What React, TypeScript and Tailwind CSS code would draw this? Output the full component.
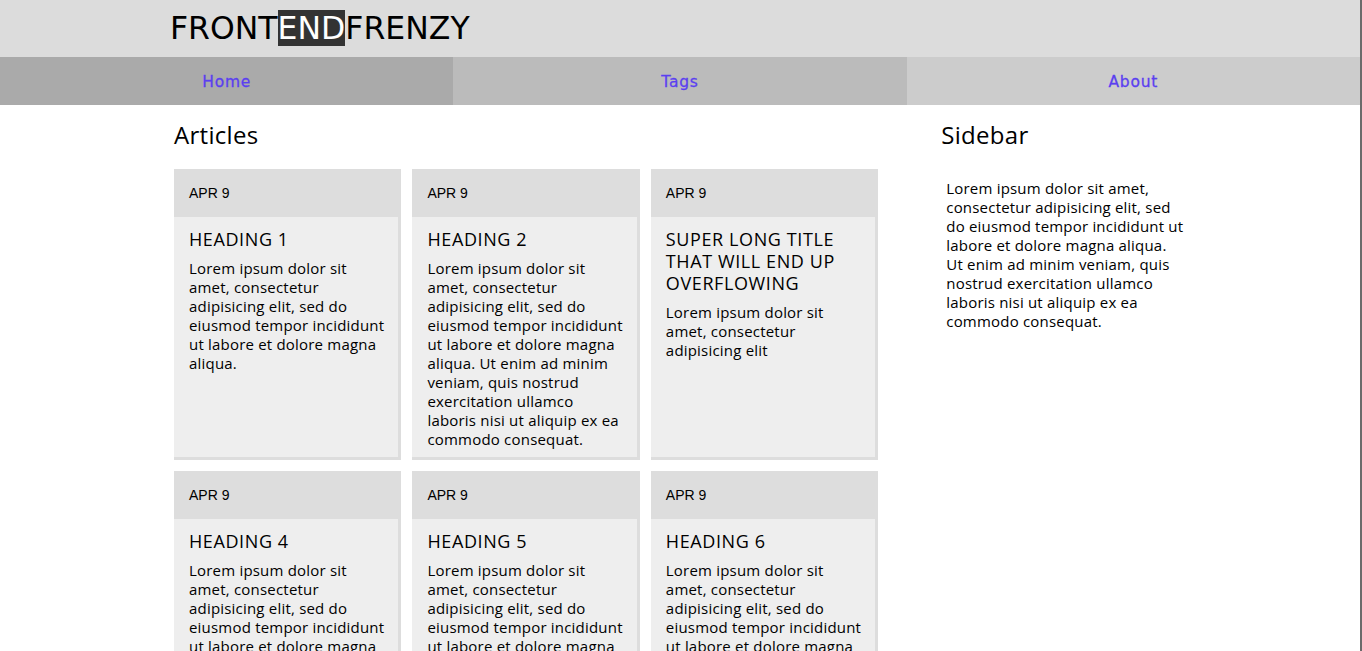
import React from 'react';

type Article = {
  date: string;
  title: string;
  body: string;
};

const LOREM_SHORT = 'Lorem ipsum dolor sit amet, consectetur adipisicing elit, sed do eiusmod tempor incididunt ut labore et dolore magna aliqua.';
const LOREM_LONG =
  'Lorem ipsum dolor sit amet, consectetur adipisicing elit, sed do eiusmod tempor incididunt ut labore et dolore magna aliqua. Ut enim ad minim veniam, quis nostrud exercitation ullamco laboris nisi ut aliquip ex ea commodo consequat.';

const articles: Article[] = [
  { date: 'APR 9', title: 'HEADING 1', body: LOREM_SHORT },
  { date: 'APR 9', title: 'HEADING 2', body: LOREM_LONG },
  { date: 'APR 9', title: 'SUPER LONG TITLE THAT WILL END UP OVERFLOWING', body: 'Lorem ipsum dolor sit amet, consectetur adipisicing elit' },
  { date: 'APR 9', title: 'HEADING 4', body: LOREM_SHORT },
  { date: 'APR 9', title: 'HEADING 5', body: LOREM_SHORT },
  { date: 'APR 9', title: 'HEADING 6', body: LOREM_SHORT },
];

const navItems = [
  { label: 'Home', bg: 'bg-[#aaaaaa]' },
  { label: 'Tags', bg: 'bg-[#bbbbbb]' },
  { label: 'About', bg: 'bg-[#cccccc]' },
];

const ArticleCard: React.FC<{ article: Article }> = ({ article }) => (
  <div className="flex flex-col bg-[#dddddd]">
    <div className="h-12 flex items-center px-[15px] pt-[1px] font-['Liberation_Sans',Arial,sans-serif] text-[14px] text-black">
      {article.date}
    </div>
    {/* body sits inside the grey frame, leaving a 3px edge right and bottom */}
    <div className="flex-1 bg-[#eeeeee] mr-[3px] mb-[3px] pl-[15px] pr-[12px] pt-[11px] pb-[8px]">
      <h3 className="text-[18px] leading-[22px] font-medium tracking-[0.6px] text-black">{article.title}</h3>
      <p className="mt-[9px] text-[15px] leading-[19px] tracking-[0.2px] text-black">{article.body}</p>
    </div>
  </div>
);

export default function App() {
  return (
    <div className="min-h-[651px] bg-white border-r-2 border-[#6b6b6b] font-['Open_Sans',Lato,sans-serif] text-black">
      <header className="bg-[#dcdcdc] pt-[10px] pb-[11px]">
        <div className="w-[1022px] mx-auto">
          <div className="flex h-9 items-center pl-[1px] font-['DejaVu_Sans',sans-serif] text-[31.5px] leading-9 text-black">
            <span>FRONT</span>
            <span className="bg-[#333333] text-white h-9 flex items-center">END</span>
            <span>FRENZY</span>
          </div>
        </div>
      </header>

      <nav className="grid grid-cols-3 h-12">
        {navItems.map((item) => (
          <a
            key={item.label}
            href="#"
            className={`${item.bg} flex items-center justify-center pt-[4px] font-['DejaVu_Sans',sans-serif] text-[15.5px] tracking-[0.8px] text-[#5b3ff0] [-webkit-text-stroke:0.3px_#5b3ff0]`}
          >
            {item.label}
          </a>
        ))}
      </nav>

      <div className="w-[1022px] mx-auto flex gap-[62px]">
        <main className="w-[705px] ml-[5px] pt-4">
          <h2 className="text-[24px] leading-7 font-medium tracking-[0.3px]">Articles</h2>
          <div className="mt-5 grid grid-cols-3 gap-[11px]">
            {articles.map((a, i) => (
              <ArticleCard key={i} article={a} />
            ))}
          </div>
        </main>

        <aside className="w-[250px] pt-4 ml-[1px]">
          <h2 className="text-[24px] leading-7 font-medium tracking-[0.3px]">Sidebar</h2>
          <p className="mt-[30px] pl-[5px] w-[245px] text-[15px] leading-[19px] tracking-[0.2px]">{LOREM_LONG}</p>
        </aside>
      </div>
    </div>
  );
}
